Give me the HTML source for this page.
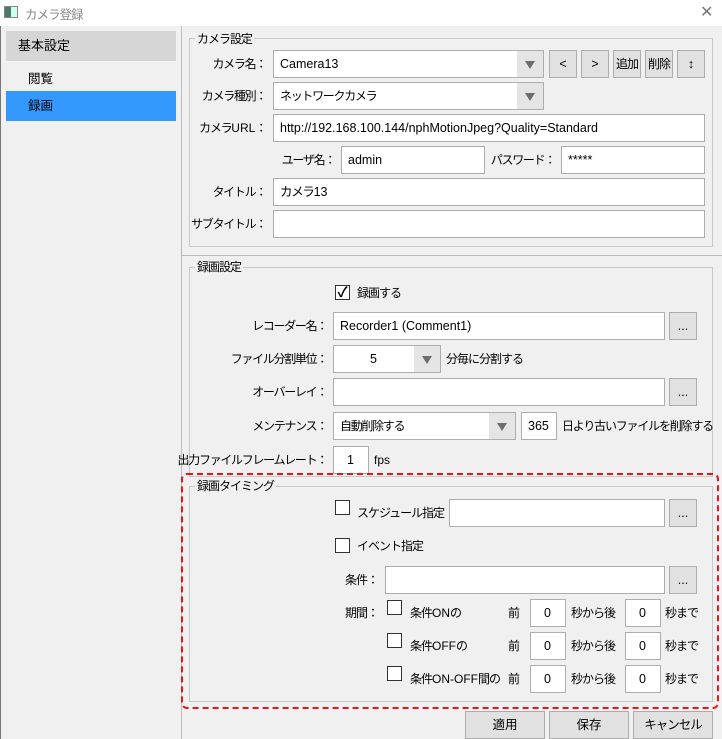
<!DOCTYPE html>
<html><head><meta charset="utf-8"><style>
*{box-sizing:border-box;margin:0;padding:0}
body{width:722px;height:739px;background:#f0f0f0;font-family:"Liberation Sans","Noto Sans CJK JP",sans-serif;font-size:12px;color:#000;position:relative;overflow:hidden}
.a{position:absolute}
.in{position:absolute;background:#fff;border:1px solid #adadad;height:28px;line-height:26px;padding-left:6px;font-size:12.5px}
.cb{position:absolute;background:#fff;border:1px solid #adadad;height:28px;line-height:26px;padding-left:6px;font-size:12.5px}
.cb .ar{position:absolute;right:0;top:0;width:26px;height:26px;background:#e5e5e5}
.cb .ar:after{content:"";position:absolute;left:8px;top:10px;border-left:5px solid transparent;border-right:5px solid transparent;border-top:8px solid #6d6d6d}
.bt{position:absolute;background:#e1e1e1;border:1px solid #adadad;height:28px;line-height:26px;text-align:center;font-size:12.5px}
.lb{position:absolute;text-align:right;line-height:28px;font-size:12px;white-space:nowrap;letter-spacing:-1.3px}
.tx{position:absolute;line-height:28px;font-size:12px;white-space:nowrap;letter-spacing:-1px}
.j{letter-spacing:-1.3px}
.l{letter-spacing:0}
.gb{position:absolute;border:1px solid #c8c8c8}
.gt{position:absolute;background:#f0f0f0;padding:0 2px;font-size:12px;line-height:14px;letter-spacing:-1px}
.ck{position:absolute;width:15px;height:15px;border:1px solid #333;background:#fff}
</style></head><body>
<div class="a" style="left:0;top:0;width:722px;height:26px;background:#fff"></div>
<div class="a" style="left:4px;top:6px;width:14px;height:12px;border:1px solid #888;background:linear-gradient(90deg,#4a7a6a 0 50%,#cfe 50%)"></div>
<div class="a" style="left:25px;top:4px;color:#888;font-size:12.5px;letter-spacing:-1px">カメラ登録</div>
<div class="a" style="left:700px;top:2px;color:#777;font-size:16px">✕</div>
<div class="a" style="left:0;top:26px;width:1px;height:713px;background:#777"></div>
<div class="a" style="left:6px;top:31px;width:170px;height:30px;background:#d6d6d6;line-height:30px;padding-left:12px;font-size:13px">基本設定</div>
<div class="a" style="left:28px;top:68px;font-size:12.5px">閲覧</div>
<div class="a" style="left:6px;top:91px;width:170px;height:30px;background:#3399ff;line-height:30px;padding-left:22px;font-size:12.5px">録画</div>
<div class="a" style="left:181px;top:26px;width:1px;height:713px;background:#bbb"></div>

<div class="gb" style="left:189px;top:38px;width:524px;height:209px"></div>
<div class="gt" style="left:195px;top:32px">カメラ設定</div>
<div class="lb" style="right:456px;top:50px">カメラ名：</div>
<div class="cb" style="left:273px;top:50px;width:271px">Camera13<div class="ar"></div></div>
<div class="bt" style="left:549px;top:50px;width:28px">&lt;</div>
<div class="bt" style="left:581px;top:50px;width:28px">&gt;</div>
<div class="bt" style="left:613px;top:50px;width:28px;font-size:12px;letter-spacing:-1px">追加</div>
<div class="bt" style="left:645px;top:50px;width:28px;font-size:12px;letter-spacing:-1px">削除</div>
<div class="bt" style="left:677px;top:50px;width:28px">↕</div>
<div class="lb" style="right:456px;top:82px">カメラ種別：</div>
<div class="cb" style="left:273px;top:82px;width:271px;font-size:12px"><span class="j">ネットワークカメラ</span><div class="ar"></div></div>
<div class="lb" style="right:456px;top:114px">カメラ<span class="l">URL</span>：</div>
<div class="in" style="left:273px;top:114px;width:432px">http://192.168.100.144/nphMotionJpeg?Quality=Standard</div>
<div class="lb" style="right:387px;top:146px">ユーザ名：</div>
<div class="in" style="left:341px;top:146px;width:144px">admin</div>
<div class="lb" style="right:167px;top:146px">パスワード：</div>
<div class="in" style="left:561px;top:146px;width:144px">*****</div>
<div class="lb" style="right:456px;top:178px">タイトル：</div>
<div class="in" style="left:273px;top:178px;width:432px"><span class="j">カメラ</span>13</div>
<div class="lb" style="right:456px;top:210px">サブタイトル：</div>
<div class="in" style="left:273px;top:210px;width:432px"></div>

<div class="a" style="left:181px;top:255px;width:541px;height:1px;background:#bbb"></div>
<div class="gb" style="left:189px;top:267px;width:524px;height:210px"></div>
<div class="gt" style="left:195px;top:260px">録画設定</div>
<div class="ck" style="left:335px;top:285px;font-size:14px;line-height:13px;text-align:center;font-weight:bold">✓</div>
<div class="tx" style="left:357px;top:279px">録画する</div>
<div class="lb" style="right:395px;top:312px">レコーダー名：</div>
<div class="in" style="left:333px;top:312px;width:332px">Recorder1 (Comment1)</div>
<div class="bt" style="left:669px;top:312px;width:28px">...</div>
<div class="lb" style="right:395px;top:345px">ファイル分割単位：</div>
<div class="cb" style="left:333px;top:345px;width:108px;padding-left:36px">5<div class="ar"></div></div>
<div class="tx" style="left:446px;top:345px">分毎に分割する</div>
<div class="lb" style="right:395px;top:378px">オーバーレイ：</div>
<div class="in" style="left:333px;top:378px;width:332px"></div>
<div class="bt" style="left:669px;top:378px;width:28px">...</div>
<div class="lb" style="right:395px;top:412px">メンテナンス：</div>
<div class="cb" style="left:333px;top:412px;width:183px;font-size:12px"><span class="j">自動削除する</span><div class="ar"></div></div>
<div class="in" style="left:521px;top:412px;width:36px;padding-left:6px">365</div>
<div class="tx" style="left:562px;top:412px;letter-spacing:-1.2px">日より古いファイルを削除する</div>
<div class="lb" style="right:395px;top:446px">出力ファイルフレームレート：</div>
<div class="in" style="left:333px;top:446px;width:36px;padding-left:13px">1</div>
<div class="tx" style="left:374px;top:446px;letter-spacing:0">fps</div>

<div class="gb" style="left:189px;top:486px;width:524px;height:216px"></div>
<div class="gt" style="left:195px;top:479px">録画タイミング</div>
<div class="ck" style="left:335px;top:500px"></div>
<div class="tx" style="left:357px;top:499px">スケジュール指定：</div>
<div class="in" style="left:449px;top:499px;width:216px"></div>
<div class="bt" style="left:669px;top:499px;width:28px">...</div>
<div class="ck" style="left:335px;top:538px"></div>
<div class="tx" style="left:357px;top:532px">イベント指定</div>
<div class="tx" style="left:345px;top:566px">条件：</div>
<div class="in" style="left:385px;top:566px;width:280px"></div>
<div class="bt" style="left:669px;top:566px;width:28px">...</div>
<div class="tx" style="left:345px;top:599px">期間：</div>
<div class="ck" style="left:387px;top:600px"></div><div class="tx" style="left:410px;top:599px">条件<span class="l">ON</span>の</div>
<div class="ck" style="left:387px;top:633px"></div><div class="tx" style="left:410px;top:632px">条件<span class="l">OFF</span>の</div>
<div class="ck" style="left:387px;top:666px"></div><div class="tx" style="left:410px;top:665px">条件<span class="l">ON-OFF</span>間の</div>
<div class="tx" style="left:508px;top:599px">前</div><div class="in" style="left:530px;top:599px;width:36px;padding-left:13px">0</div><div class="tx" style="left:571px;top:599px">秒から後</div><div class="in" style="left:625px;top:599px;width:36px;padding-left:13px">0</div><div class="tx" style="left:665px;top:599px">秒まで</div>
<div class="tx" style="left:508px;top:632px">前</div><div class="in" style="left:530px;top:632px;width:36px;padding-left:13px">0</div><div class="tx" style="left:571px;top:632px">秒から後</div><div class="in" style="left:625px;top:632px;width:36px;padding-left:13px">0</div><div class="tx" style="left:665px;top:632px">秒まで</div>
<div class="tx" style="left:508px;top:665px">前</div><div class="in" style="left:530px;top:665px;width:36px;padding-left:13px">0</div><div class="tx" style="left:571px;top:665px">秒から後</div><div class="in" style="left:625px;top:665px;width:36px;padding-left:13px">0</div><div class="tx" style="left:665px;top:665px">秒まで</div>
<div class="a" style="left:181px;top:473px;width:538px;height:236px;border:2px dashed #e8161b;border-radius:6px"></div>

<div class="bt" style="left:465px;top:711px;width:80px">適用</div>
<div class="bt" style="left:549px;top:711px;width:80px">保存</div>
<div class="bt" style="left:633px;top:711px;width:80px;letter-spacing:-1px">キャンセル</div>
</body></html>
